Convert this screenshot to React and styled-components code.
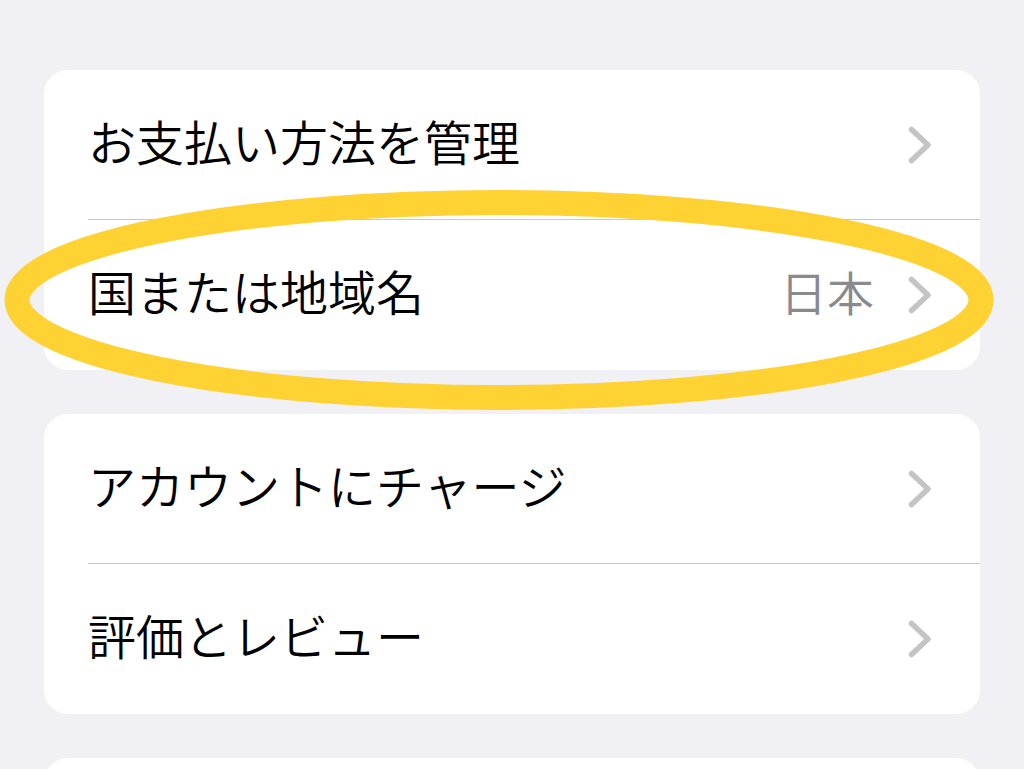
import React from "react";
import styled, { createGlobalStyle } from "styled-components";

const Global = createGlobalStyle`
  html, body {
    margin: 0;
    padding: 0;
    background: #f0f0f5;
  }
  body {
    font-family: "Noto Sans CJK JP", "Noto Sans", sans-serif;
    -webkit-font-smoothing: antialiased;
  }
`;

const Page = styled.div`
  position: relative;
  height: 769px;
  overflow: hidden;
  padding: 70px 44px 0;
  box-sizing: border-box;
  display: flex;
  flex-direction: column;
  gap: 44px;
`;

const Card = styled.div`
  background: #ffffff;
  border-radius: 24px;
  overflow: hidden;
  flex-shrink: 0;
`;

const Row = styled.div`
  display: flex;
  padding-left: 44px;
`;

const RowBody = styled.div`
  flex: 1;
  display: flex;
  align-items: center;
  height: ${(p) => (p.$last ? 150 : 149)}px;
  padding-right: 48px;
  border-bottom: ${(p) => (p.$last ? "none" : "1px solid #c8c8cc")};
`;

const Label = styled.span`
  flex: 1;
  font-size: 48px;
  font-weight: 350;
  line-height: 1;
  color: #000000;
  white-space: nowrap;
  margin-bottom: 10px;
`;

const Value = styled.span`
  font-size: 47px;
  font-weight: 350;
  line-height: 1;
  color: #8a8a8e;
  margin-right: 34px;
  margin-bottom: 10px;
`;

const Chevron = styled.svg`
  width: 24px;
  height: 38px;
  flex-shrink: 0;
`;

const Highlight = styled.svg`
  position: absolute;
  left: 4px;
  top: 190px;
  width: 990px;
  height: 220px;
  pointer-events: none;
`;

function ChevronIcon() {
  return (
    <Chevron viewBox="0 0 24 38">
      <polyline
        points="3.5,3.5 20,19 3.5,34.5"
        fill="none"
        stroke="#c4c4c7"
        strokeWidth="5.5"
        strokeLinecap="round"
        strokeLinejoin="round"
      />
    </Chevron>
  );
}

function Item({ label, value, last }) {
  return (
    <Row>
      <RowBody $last={last}>
        <Label>{label}</Label>
        {value && <Value>{value}</Value>}
        {label && <ChevronIcon />}
      </RowBody>
    </Row>
  );
}

export default function App() {
  return (
    <>
      <Global />
      <Page>
        <Card>
          <Item label="お支払い方法を管理" />
          <Item label="国または地域名" value="日本" last />
        </Card>
        <Card>
          <Item label="アカウントにチャージ" />
          <Item label="評価とレビュー" last />
        </Card>
        <Card>
          <Item label="" last />
        </Card>
        <Highlight viewBox="0 0 990 220">
          <ellipse
            cx="495"
            cy="110"
            rx="482"
            ry="97.5"
            fill="none"
            stroke="#fed232"
            strokeWidth="25"
          />
        </Highlight>
      </Page>
    </>
  );
}
